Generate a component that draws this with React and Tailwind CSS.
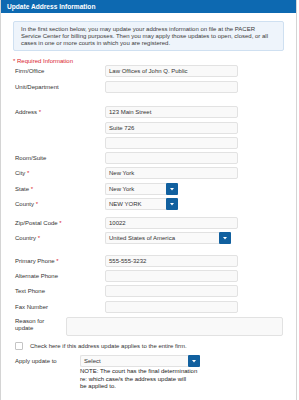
import React from "react";

const font = { fontFamily: '"Liberation Sans", Arial, sans-serif' };

function Req() {
  return <span className="text-[#d9232d]"> *</span>;
}

function Input({ value = "", w = "w-[133px]", className = "" }) {
  return (
    <div
      className={`${w} h-[12px] border border-[#e2e2e2] bg-[#f9f9f9] rounded-[2px] flex items-center pl-[3px] text-[6px] text-[#333] whitespace-nowrap overflow-hidden ${className}`}
    >
      {value}
    </div>
  );
}

function Caret() {
  return (
    <svg width="4" height="3" viewBox="0 0 4 3">
      <path d="M0 0 L4 0 L2 2.5 Z" fill="#fff" />
    </svg>
  );
}

function Select({ value, w }) {
  return (
    <div className={`${w} h-[12px] flex`}>
      <div className="flex-1 h-full border border-[#e2e2e2] border-r-0 bg-[#fafafa] rounded-l-[2px] flex items-center pl-[3px] text-[6px] text-[#333] whitespace-nowrap overflow-hidden">
        {value}
      </div>
      <div className="w-[12px] h-full bg-[#11609f] rounded-[1px] flex items-center justify-center">
        <Caret />
      </div>
    </div>
  );
}

function Row({ label, req, children, mt }) {
  return (
    <div className={`flex items-center ${mt}`}>
      <div className="w-[90px] text-[6px] text-[#333] leading-[8px] whitespace-nowrap">
        {label}
        {req && <Req />}
      </div>
      {children}
    </div>
  );
}

export default function App() {
  return (
    <div className="w-[299px] h-[400px] bg-white overflow-hidden" style={font}>
      <div className="w-[297px] h-[400px] border-x border-[#d4d4d4] bg-white">
        <div className="h-[13px] bg-[#0d69b1] flex items-center pl-[6px] text-white text-[6.6px] font-bold">
          Update Address Information
        </div>

        <div className="ml-[12px] mt-[8px] w-[271px] h-[30px] border border-[#cfe0f1] bg-[#eef4fb] rounded-[2px] pl-[7px] pt-[4px] text-[6px] leading-[7px] text-[#3a3a3a] whitespace-nowrap">
          In the first section below, you may update your address information on file at the PACER
          <br />
          Service Center for billing purposes. Then you may apply those updates to open, closed, or all
          <br />
          cases in one or more courts in which you are registered.
        </div>

        <div className="ml-[12px] mt-[6px] h-[8px] text-[6px] leading-[8px] text-[#d9232d]">
          * Required Information
        </div>

        <div className="ml-[14px]">
          <Row label="Firm/Office" mt="mt-0">
            <Input value="Law Offices of John Q. Public" />
          </Row>
          <Row label="Unit/Department" mt="mt-[4px]">
            <Input />
          </Row>

          <div className="flex mt-[13px]">
            <div className="w-[90px] h-[12px] flex items-center text-[6px] text-[#333] leading-[8px]">
              <span>
                Address
                <Req />
              </span>
            </div>
            <div className="flex flex-col">
              <Input value="123 Main Street" />
              <Input value="Suite 726" className="mt-[4px]" />
              <Input className="mt-[3px]" />
            </div>
          </div>

          <Row label="Room/Suite" mt="mt-[3px]">
            <Input />
          </Row>
          <Row label="City" req mt="mt-[3px]">
            <Input value="New York" />
          </Row>
          <Row label="State" req mt="mt-[4px]">
            <Select value="New York" w="w-[73px]" />
          </Row>
          <Row label="County" req mt="mt-[3px]">
            <Select value="NEW YORK" w="w-[73px]" />
          </Row>
          <Row label="Zip/Postal Code" req mt="mt-[7px]">
            <Input value="10022" />
          </Row>
          <Row label="Country" req mt="mt-[3px]">
            <Select value="United States of America" w="w-[126px]" />
          </Row>
          <Row label="Primary Phone" req mt="mt-[11px]">
            <Input value="555-555-3232" />
          </Row>
          <Row label="Alternate Phone" mt="mt-[3px]">
            <Input />
          </Row>
          <Row label="Text Phone" mt="mt-[3px]">
            <Input />
          </Row>
          <Row label="Fax Number" mt="mt-[4px]">
            <Input />
          </Row>

          <div className="flex mt-[4px]">
            <div className="w-[51px] text-[6px] leading-[7px] text-[#333] pt-[1px]">
              Reason for
              <br />
              update
            </div>
            <div className="w-[217px] h-[19px] border border-[#e2e2e2] bg-[#f9f9f9] rounded-[2px]" />
          </div>

          <div className="flex items-center mt-[6px] h-[8px]">
            <div className="w-[8px] h-[8px] border border-[#c4c4c4] bg-white rounded-[1px]" />
            <div className="ml-[7px] text-[6px] text-[#333] whitespace-nowrap">
              Check here if this address update applies to the entire firm.
            </div>
          </div>

          <div className="flex items-center mt-[5px]">
            <div className="w-[65px] text-[6px] text-[#333] leading-[8px]">Apply update to</div>
            <Select value="Select" w="w-[120px]" />
          </div>
          <div className="ml-[65px] mt-[1px] text-[6px] leading-[7.5px] text-[#222] whitespace-nowrap">
            NOTE: The court has the final determination
            <br />
            re: which case/s the address update will
            <br />
            be applied to.
          </div>
        </div>
      </div>
    </div>
  );
}
